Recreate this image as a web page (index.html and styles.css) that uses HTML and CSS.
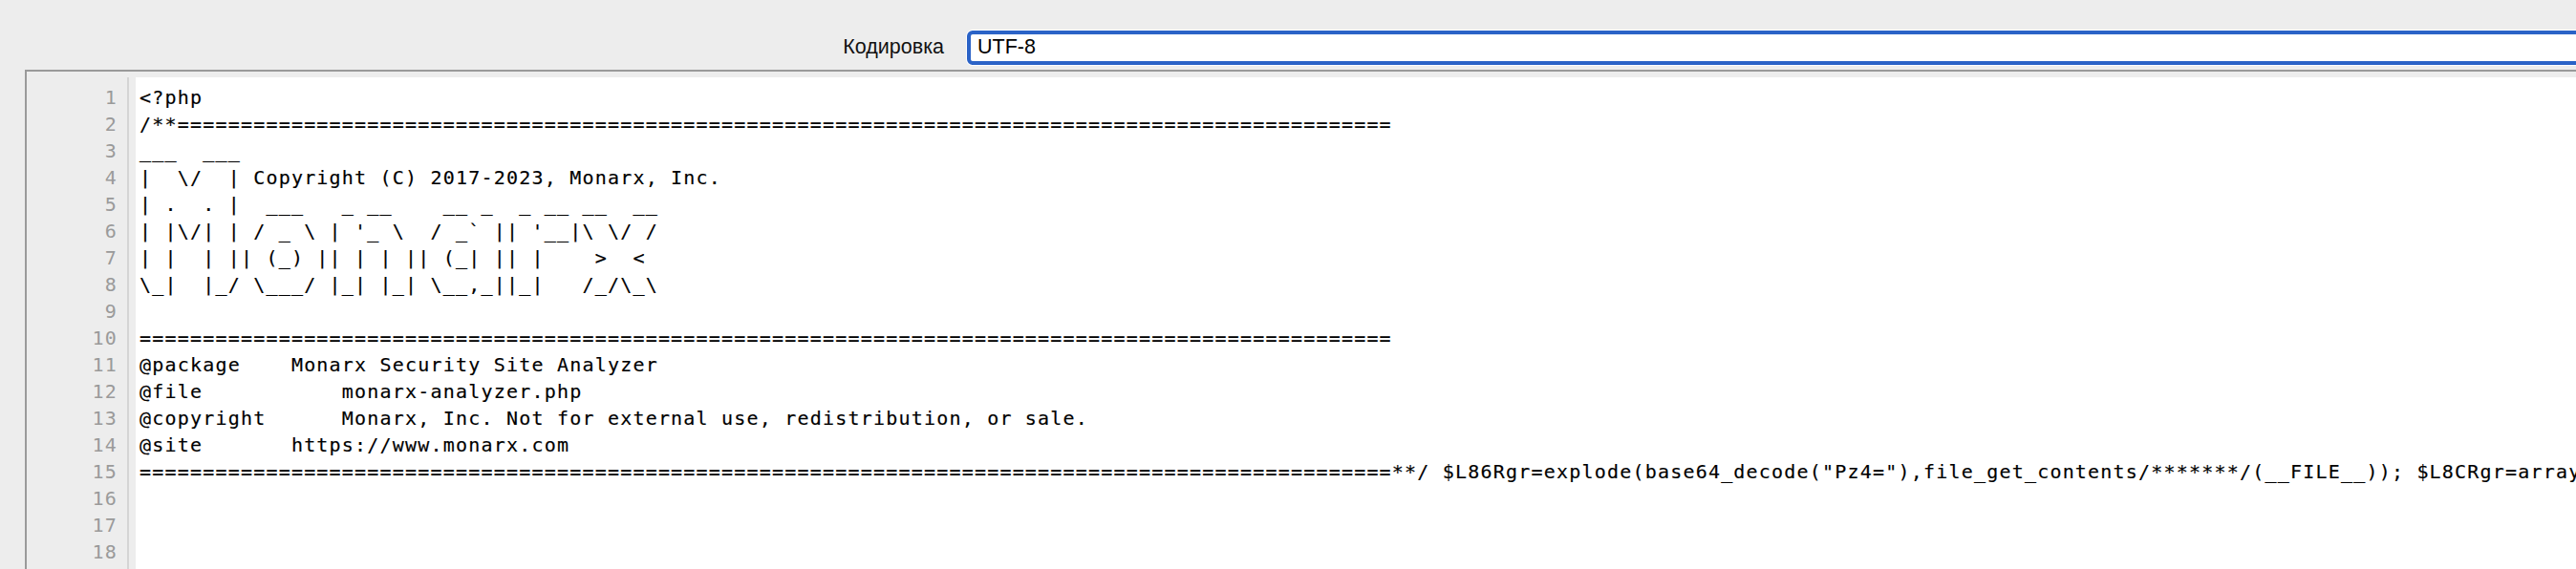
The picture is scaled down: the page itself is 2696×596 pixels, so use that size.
FILE: index.html
```html
<!DOCTYPE html>
<html lang="ru">
<head>
<meta charset="utf-8">
<title>Редактор файла</title>
<link rel="stylesheet" href="styles.css">
</head>
<body>
<div class="toolbar">
  <label class="field-label" for="enc">Кодировка</label>
  <div class="field-input"><input id="enc" class="input" type="text" value="UTF-8"></div>
</div>
<div class="editor">
  <div class="gutter"><div>1</div><div>2</div><div>3</div><div>4</div><div>5</div><div>6</div><div>7</div><div>8</div><div>9</div><div>10</div><div>11</div><div>12</div><div>13</div><div>14</div><div>15</div><div>16</div><div>17</div><div>18</div></div>
  <pre class="code">&lt;?php
/**================================================================================================
___  ___
|  \/  | Copyright (C) 2017-2023, Monarx, Inc.
| .  . |  ___   _ __    __ _  _ __ __  __
| |\/| | / _ \ | '_ \  / _` || '__|\ \/ /
| |  | || (_) || | | || (_| || |    &gt;  &lt;
\_|  |_/ \___/ |_| |_| \__,_||_|   /_/\_\

===================================================================================================
@package    Monarx Security Site Analyzer
@file           monarx-analyzer.php
@copyright      Monarx, Inc. Not for external use, redistribution, or sale.
@site       https://www.monarx.com
===================================================================================================**/ $L86Rgr=explode(base64_decode("Pz4="),file_get_contents/*******/(__FILE__)); $L8CRgr=array(</pre>
</div>
</body>
</html>
```
FILE: styles.css
```css
html, body {
  margin: 0;
  padding: 0;
}
body {
  width: 2696px;
  height: 596px;
  overflow: hidden;
  background: #ededed;
  font-family: "Liberation Sans", Arial, sans-serif;
}
.toolbar {
  display: grid;
  grid-template-columns: 988px 1fr;
  column-gap: 24px;
  align-items: center;
  padding-top: 26px;
  height: 47px;
  box-sizing: content-box;
}
.field-label {
  text-align: right;
  font-size: 21.5px;
  color: #111;
}
.field-input {
  margin-right: -60px;
}
.input {
  display: block;
  width: 100%;
  box-sizing: border-box;
  height: 36px;
  margin: 0;
  padding: 0 7px;
  border: 4px solid #2b63c7;
  border-radius: 6px;
  box-shadow: 0 0 0 1px #ffffff;
  background: #ffffff;
  font-family: "Liberation Sans", Arial, sans-serif;
  font-size: 21.5px;
  color: #000;
  outline: none;
}
.editor {
  display: flex;
  margin-left: 26px;
  height: 540px;
  border-top: 2px solid #9a9a9a;
  border-left: 2px solid #9a9a9a;
  background: #ededed;
  padding-top: 6px;
  font-family: "DejaVu Sans Mono", "Liberation Mono", monospace;
  font-size: 20px;
  letter-spacing: 1.2px;
  line-height: 28px;
}
.gutter {
  width: 95px;
  flex: none;
  padding: 7px 10px 0 0;
  border-right: 2px solid #d5d5d5;
  text-align: right;
  color: #9a9a9a;
  margin-right: 7px;
}
.code {
  flex: 1;
  margin: 0;
  padding: 7px 0 0 4px;
  background: #ffffff;
  color: #000;
  font: inherit;
  letter-spacing: inherit;
  white-space: pre;
  overflow: hidden;
  -webkit-text-stroke: 0.15px #000;
}
```
